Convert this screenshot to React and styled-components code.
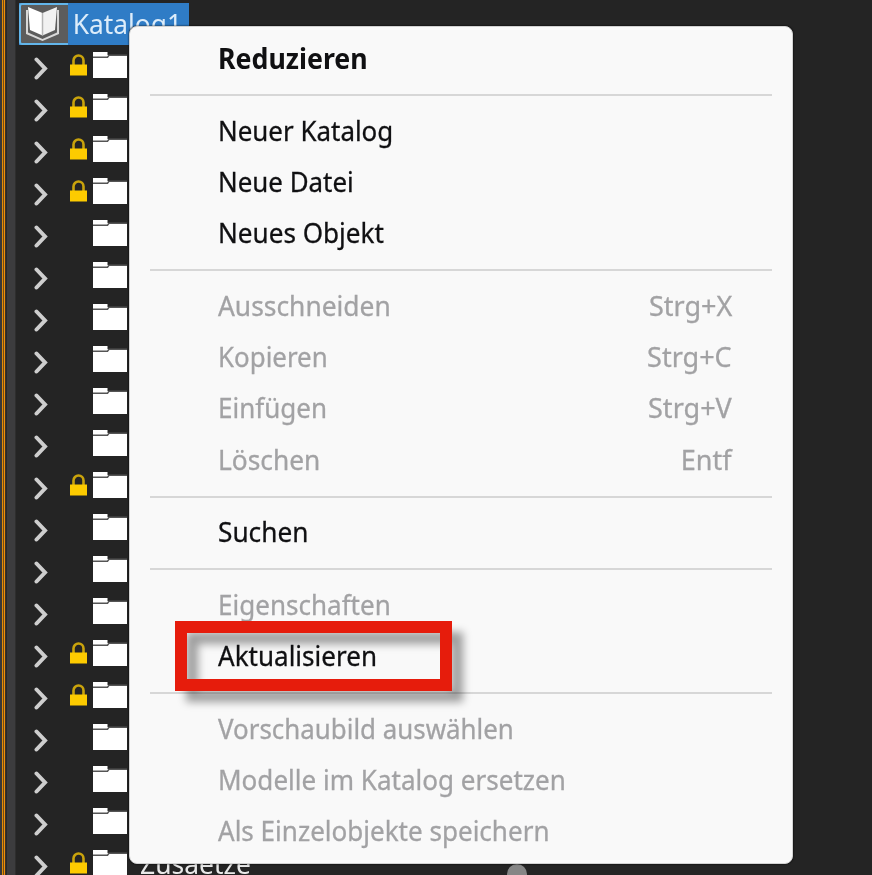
import { Fragment } from "react";
import styled, { createGlobalStyle } from "styled-components";

const GlobalStyle = createGlobalStyle`
  * {
    box-sizing: border-box;
  }
  body {
    margin: 0;
    background: #242424;
    font-family: "Noto Sans", "Open Sans", sans-serif;
    font-size: 28px;
    overflow: hidden;
  }
`;

const LOCKED_ROWS = [0, 1, 2, 3, 10, 14, 15, 19];

const rows = Array.from({ length: 20 }, (_, i) => ({
  locked: LOCKED_ROWS.includes(i),
  label: i === 19 ? "Zusaetze" : "",
}));

const groups = [
  [{ label: "Reduzieren", bold: true, stretch: 0.955 }],
  [
    { label: "Neuer Katalog", stretch: 0.926 },
    { label: "Neue Datei", stretch: 0.925 },
    { label: "Neues Objekt", stretch: 0.932 },
  ],
  [
    { label: "Ausschneiden", shortcut: "Strg+X", disabled: true, stretch: 0.942 },
    { label: "Kopieren", shortcut: "Strg+C", disabled: true, stretch: 0.925 },
    { label: "Einfügen", shortcut: "Strg+V", disabled: true },
    { label: "Löschen", shortcut: "Entf", disabled: true, stretch: 0.94 },
  ],
  [{ label: "Suchen", stretch: 0.937 }],
  [
    { label: "Eigenschaften", disabled: true, stretch: 0.93 },
    { label: "Aktualisieren", marked: true, stretch: 0.93 },
  ],
  [
    { label: "Vorschaubild auswählen", disabled: true, stretch: 0.925 },
    { label: "Modelle im Katalog ersetzen", disabled: true },
    { label: "Als Einzelobjekte speichern", disabled: true },
  ],
];

const Screen = styled.div`
  position: relative;
  display: flex;
  width: 872px;
  height: 875px;
  overflow: hidden;
  background: #242424;
`;

const Edge = styled.div`
  flex: none;
  width: 16px;
  background: linear-gradient(
    to right,
    #383838 0 2px,
    #e38a06 2px 3px,
    #6f4c1a 3px 4px,
    #ef9008 4px 5px,
    #3a3025 5px 6px,
    #292929 6px 7px,
    #3c3c3e 7px 15px,
    #2e2e2e 15px
  );
`;

const Tree = styled.div`
  flex: none;
  padding: 3px 0 0 3px;
`;

const Root = styled.div`
  display: flex;
  width: 170px;
  height: 42px;
  background: #2f7cc6;
  color: #dcecfa;
`;

const RootIcon = styled.div`
  display: flex;
  flex: none;
  width: 49px;
  padding: 1px 0 0 5px;
  border: 2px solid #62b5ea;
  border-right: 0;
  border-radius: 3px 0 0 3px;
  background: #5c5c5c;
`;

const RootLabel = styled.span`
  padding-left: 5px;
  line-height: 40px;
  transform: scaleX(0.94);
  transform-origin: left;
`;

const Rows = styled.div`
  padding: 3px 0 0 15px;
`;

const Row = styled.div`
  display: flex;
  align-items: flex-start;
  height: 42px;
  padding-top: 4px;
  color: #e8e8e8;

  & .chevron {
    margin-top: 5px;
  }
`;

const LockSlot = styled.div`
  flex: none;
  display: flex;
  width: 17px;
  height: 24px;
  margin: 2px 6px 0 22px;
`;

const RowLabel = styled.span`
  margin-left: 13px;
  line-height: 26px;
  transform: scaleX(0.945);
  transform-origin: left;
`;

const Menu = styled.div`
  position: absolute;
  top: 26px;
  left: 129px;
  width: 664px;
  height: 838px;
  padding: 6px 20px 0 20px;
  border: 1px solid #d2d2d2;
  border-radius: 8px;
  background: #f9f9f9;
  box-shadow: 0 0 2px #000;
`;

const Item = styled.div`
  position: relative;
  display: flex;
  justify-content: space-between;
  height: 51.35px;
  padding: 0 40px 0 68px;
  line-height: ${({ $bold }) => ($bold ? "51px" : "49px")};
  white-space: nowrap;
  color: ${({ $disabled }) => ($disabled ? "#a2a2a4" : "#101012")};
  font-weight: ${({ $bold }) => ($bold ? 700 : 400)};
  -webkit-text-stroke: ${({ $bold }) => ($bold ? 0 : "0.3px")};
`;

const Label = styled.span`
  transform: scaleX(${({ $stretch = 0.93 }) => $stretch});
  transform-origin: left;
`;

const Shortcut = styled.span`
  transform: scaleX(0.965);
  transform-origin: right;
`;

const Separator = styled.div`
  height: 2px;
  margin: 9.6px 0;
  background: #d7d7d7;
`;

const Marker = styled.div`
  position: absolute;
  top: -10px;
  left: 25px;
  width: 277px;
  height: 70px;
  border: 12px solid #e61c0c;
  filter: drop-shadow(11px 11px 4px rgba(0, 0, 0, 0.37));
`;

const Handle = styled.div`
  position: absolute;
  top: 864px;
  left: 507px;
  width: 20px;
  height: 20px;
  border-radius: 50%;
  background: #868686;
`;

const BookIcon = () => (
  <svg width="33" height="35" viewBox="0 0 33 35">
    <path d="M0 4v24l16.500 7L33 28V4h-2v22.500L16.500 33 2 26.500V4z" fill="#d8d8d8" />
    <path d="M2 1l14.500 6v22.500L4 24z" fill="#fff" />
    <path d="M31 1L16.500 7v22.500L29 24z" fill="#f1f1f1" />
    <path d="M16.500 7v22.500" stroke="#b5b5b5" strokeWidth="1.500" />
  </svg>
);

const Chevron = () => (
  <svg className="chevron" width="14" height="23" viewBox="0 0 14 23">
    <path
      d="M2.500 2.500l8.500 9-8.500 9"
      fill="none"
      stroke="#cecece"
      strokeWidth="4"
      strokeLinecap="round"
    />
  </svg>
);

const LockIcon = () => (
  <svg width="17" height="22" viewBox="0 0 17 22">
    <path d="M3.500 11V6.500a5 5 0 0110 0V11" fill="none" stroke="#c9a30c" strokeWidth="2.600" />
    <path d="M0 10.500h17V21.500H0z" fill="#fdcb00" />
  </svg>
);

const FolderIcon = () => (
  <svg width="34" height="26" viewBox="0 0 34 26">
    <path d="M0 0h14.500v3H34v23H0z" fill="#fff" />
    <path d="M0 5.200h14.500L16 3.200H34" fill="none" stroke="#555" strokeWidth="1.500" />
  </svg>
);

const App = () => (
  <>
    <GlobalStyle />
    <Screen>
      <Edge />
      <Tree>
        <Root>
          <RootIcon>
            <BookIcon />
          </RootIcon>
          <RootLabel>Katalog1</RootLabel>
        </Root>
        <Rows>
          {rows.map((row, i) => (
            <Row key={i}>
              <Chevron />
              <LockSlot>{row.locked && <LockIcon />}</LockSlot>
              <FolderIcon />
              <RowLabel>{row.label}</RowLabel>
            </Row>
          ))}
        </Rows>
      </Tree>
      <Handle />
      <Menu>
        {groups.map((items, i) => (
          <Fragment key={i}>
            {i > 0 && <Separator />}
            {items.map(({ label, shortcut, disabled, bold, marked, stretch }) => (
              <Item key={label} $disabled={disabled} $bold={bold}>
                {marked && <Marker />}
                <Label $stretch={stretch}>{label}</Label>
                {shortcut && <Shortcut>{shortcut}</Shortcut>}
              </Item>
            ))}
          </Fragment>
        ))}
      </Menu>
    </Screen>
  </>
);

export default App;
